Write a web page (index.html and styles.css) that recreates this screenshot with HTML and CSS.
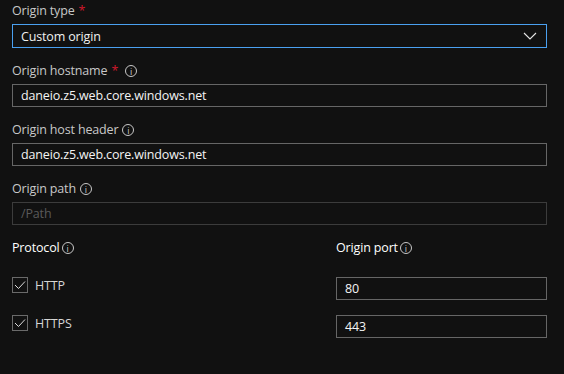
FILE: index.html
```html
<html>

<head>
    <meta name="viewport" content="width=device-width, initial-scale=1">
    <link rel="stylesheet" href="styles.css">
</head>

<body>
    <div class="form">
        <div class="group">
            <div class="label">Origin type <span class="required">*</span></div>
            <div class="select">
                <span>Custom origin</span>
                <svg class="chevron" width="14" height="8" viewBox="0 0 14 8">
                    <path d="M1 1 L7 7 L13 1" fill="none" stroke="#e6e6e6" stroke-width="1.1"/>
                </svg>
            </div>
        </div>

        <div class="group">
            <div class="label">Origin hostname <span class="required">*</span> <span class="info">i</span></div>
            <div class="field">daneio.z5.web.core.windows.net</div>
        </div>

        <div class="group">
            <div class="label">Origin host header <span class="info">i</span></div>
            <div class="field">daneio.z5.web.core.windows.net</div>
        </div>

        <div class="group">
            <div class="label">Origin path <span class="info">i</span></div>
            <div class="field disabled">/Path</div>
        </div>

        <div class="split">
            <div class="column protocol">
                <div class="label bright">Protocol<span class="info tight">i</span></div>
                <div class="check-row">
                    <span class="checkbox">
                        <svg width="12" height="10" viewBox="0 0 12 10">
                            <path d="M1 5 L4.5 8.5 L11 1.5" fill="none" stroke="#dcdcdc" stroke-width="1"/>
                        </svg>
                    </span>
                    HTTP
                </div>
                <div class="check-row">
                    <span class="checkbox">
                        <svg width="12" height="10" viewBox="0 0 12 10">
                            <path d="M1 5 L4.5 8.5 L11 1.5" fill="none" stroke="#dcdcdc" stroke-width="1"/>
                        </svg>
                    </span>
                    HTTPS
                </div>
            </div>
            <div class="column port">
                <div class="label bright">Origin port<span class="info tight">i</span></div>
                <div class="field">80</div>
                <div class="field">443</div>
            </div>
        </div>
    </div>
</body>

</html>
```

FILE: styles.css
```css
body {
    background-color: #111111;
    margin: 0;
    font-family: 'Open Sans', 'Noto Sans', sans-serif;
    font-size: 12.5px;
    letter-spacing: -0.15px;
    color: #f0f0f0;
}

.form {
    width: 535px;
    padding: 1px 0 0 12px;
}

.group {
    margin-bottom: 13px;
}

.label {
    height: 20px;
    line-height: 20px;
    margin-bottom: 3px;
    color: #c8c8c8;
    display: flex;
    align-items: center;
}

.label.bright {
    color: #ffffff;
}

.required {
    color: #d0182b;
    margin-left: 4px;
    margin-right: 3px;
}

.info {
    display: inline-flex;
    align-items: center;
    justify-content: center;
    box-sizing: border-box;
    width: 12px;
    height: 12px;
    border: 1px solid #c8c8c8;
    border-radius: 50%;
    font-size: 9px;
    letter-spacing: 0;
    line-height: 1;
    margin-left: 4px;
    color: #c8c8c8;
}

.info.tight {
    margin-left: 2px;
}

.select {
    height: 24px;
    box-sizing: border-box;
    border: 1px solid #4aa0f0;
    display: flex;
    align-items: center;
    justify-content: space-between;
    padding: 0 9px 0 8px;
}

.field {
    height: 23px;
    box-sizing: border-box;
    border: 1px solid #666666;
    line-height: 21px;
    padding-left: 8px;
    color: #f4f4f4;
}

.field.disabled {
    border-color: #3c3c3c;
    color: #5a5a5a;
}

.split {
    display: flex;
    margin-top: 13px;
}

.column {
    display: flex;
    flex-direction: column;
}

.protocol {
    width: 324px;
}

.port {
    flex: 1;
}

.split .label {
    margin-bottom: 19px;
}

.port .field {
    margin-bottom: 15px;
}

.check-row {
    height: 23px;
    margin-bottom: 15px;
    display: flex;
    align-items: flex-start;
    line-height: 18px;
    color: #d6d6d6;
}

.checkbox {
    width: 16px;
    height: 16px;
    box-sizing: border-box;
    border: 1px solid #6a6a6a;
    display: inline-flex;
    align-items: center;
    justify-content: center;
    margin-right: 7px;
}
```
